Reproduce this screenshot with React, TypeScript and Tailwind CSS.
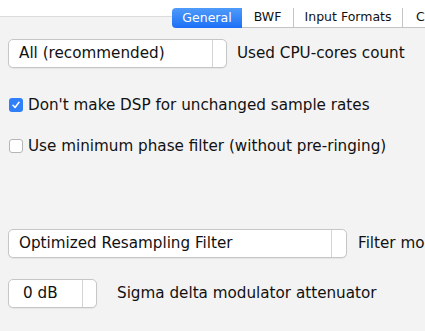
const FONT = { fontFamily: '"Lucida Grande", "DejaVu Sans", Verdana, sans-serif' };

function Combo({ value, width, sep, pad }: { value: string; width: string; sep: string; pad: string }) {
  return (
    <div className={`flex h-[29px] ${width} shrink-0 rounded-[5px] border border-[#c6c6c6] bg-white shadow-[0_1px_1px_rgba(0,0,0,0.06)]`}>
      <div className={`flex items-center ${sep} ${pad} whitespace-nowrap text-[15.2px] text-[#111]`}>{value}</div>
      <div className="h-full border-l border-[#d4d4d4]" />
    </div>
  );
}

function Check({ checked, label }: { checked?: boolean; label: string }) {
  return (
    <div className="flex h-[18px] items-center gap-[5px] pl-[9px]">
      {checked ? (
        <div className="flex h-[14px] w-[14px] items-center justify-center rounded-[3px] bg-[#2f7ff8]">
          <svg width="10" height="10" viewBox="0 0 10 10">
            <path d="M2 5.2 L4.1 7.5 L8 2.3" fill="none" stroke="white" strokeWidth="1.5" strokeLinecap="round" strokeLinejoin="round" />
          </svg>
        </div>
      ) : (
        <div className="h-[14px] w-[14px] rounded-[3px] border border-[#b5b5b5] bg-white" />
      )}
      <span className="whitespace-nowrap text-[15.2px] text-[#111]">{label}</span>
    </div>
  );
}

export default function App() {
  return (
    <div className="h-[331px] w-[425px] overflow-hidden bg-[#f3f3f3]" style={FONT}>
      <div className="relative h-[17px] border-b border-[#dcdcdc] bg-white">
        <div className="absolute left-[172px] top-[8px] flex h-[20px] whitespace-nowrap text-[12.5px]">
          <div className="flex w-[70px] items-center justify-center rounded-l-[4px] bg-gradient-to-b from-[#4e9bfa] to-[#1b6ff5] text-white">General</div>
          <div className="flex w-[51px] items-center justify-center border-b border-[#c4c4c4] bg-white text-[#111]">BWF</div>
          <div className="flex w-[109px] items-center justify-center border-b border-l border-[#c4c4c4] bg-white text-[#111]">Input Formats</div>
          <div className="flex w-[60px] items-center border-b border-l border-[#c4c4c4] bg-white pl-[13px] text-[#111]">Clipping</div>
        </div>
      </div>

      <div className="mt-[22px] flex h-[29px] items-center gap-[10px] pl-[8px]">
        <Combo value="All (recommended)" width="w-[219px]" sep="w-[203px]" pad="pl-[10px]" />
        <span className="whitespace-nowrap text-[15.2px] text-[#111]">Used CPU-cores count</span>
      </div>

      <div className="mt-[28px]">
        <Check checked label="Don't make DSP for unchanged sample rates" />
      </div>
      <div className="mt-[23px]">
        <Check label="Use minimum phase filter (without pre-ringing)" />
      </div>

      <div className="mt-[74px] flex h-[29px] items-center gap-[11px] pl-[8px]">
        <Combo value="Optimized Resampling Filter" width="w-[339px]" sep="w-[322px]" pad="pl-[10px]" />
        <span className="whitespace-nowrap text-[15.2px] text-[#111]">Filter mode</span>
      </div>

      <div className="mt-[21px] flex h-[29px] items-center gap-[20px] pl-[8px]">
        <Combo value="0 dB" width="w-[89px]" sep="w-[73px]" pad="pl-[14px]" />
        <span className="whitespace-nowrap text-[15.2px] text-[#111]">Sigma delta modulator attenuator</span>
      </div>
    </div>
  );
}
